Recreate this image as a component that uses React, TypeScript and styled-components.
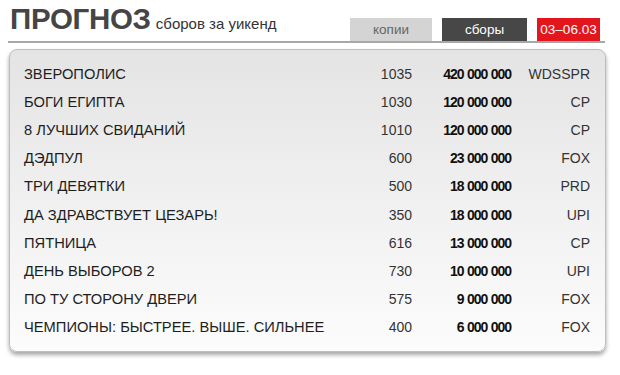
import React from "react";
import styled, { createGlobalStyle } from "styled-components";

const Global = createGlobalStyle`
  html, body { margin: 0; padding: 0; background: #fff; }
  body { font-family: "Liberation Sans", Arial, sans-serif; }
`;

const Page = styled.div`
  width: 620px;
  height: 375px;
  padding: 0 0 0 8px;
  box-sizing: border-box;
`;

const Header = styled.div`
  width: 597px;
  height: 43px;
  display: flex;
  align-items: flex-end;
  border-bottom: 2px solid #a8a8a8;
  box-sizing: border-box;
`;

const Title = styled.div`
  display: flex;
  align-items: baseline;
  gap: 5px;
  padding-left: 2px;
  margin-bottom: 5px;
  flex: 1;
`;

const Big = styled.span`
  font-size: 29.5px;
  font-weight: bold;
  color: #454545;
  letter-spacing: -0.3px;
`;

const Small = styled.span`
  font-size: 15px;
  color: #333;
`;

const Tabs = styled.div`
  display: flex;
  gap: 10px;
  padding-right: 5px;
`;

const Tab = styled.div<{ $bg: string; $fg: string; $w: number }>`
  width: ${(p) => p.$w}px;
  height: 23px;
  background: ${(p) => p.$bg};
  color: ${(p) => p.$fg};
  font-size: 13.5px;
  display: flex;
  align-items: center;
  justify-content: center;
`;

const Card = styled.div`
  margin-top: 6px;
  margin-left: 1px;
  width: 597px;
  height: 303px;
  box-sizing: border-box;
  border: 1px solid #bdbdbd;
  border-radius: 8px;
  background: linear-gradient(to bottom, #e4e4e4 0%, #f0f0f0 50%, #fcfcfc 100%);
  box-shadow: 0 3px 4px rgba(0, 0, 0, 0.35);
  padding: 10px 15px 10px 14px;
  display: flex;
  flex-direction: column;
`;

const Row = styled.div`
  display: grid;
  grid-template-columns: 1fr 60px 100px 78px;
  height: 28.2px;
  align-items: center;
  font-size: 14px;
  color: #1e1e1e;
`;

const Name = styled.div`
  font-size: 14.7px;
`;

const Num = styled.div`
  text-align: right;
  color: #333;
`;

const Money = styled.div`
  text-align: right;
  font-weight: bold;
  color: #111;
  letter-spacing: -1px;
  word-spacing: 0.5px;
  padding-right: 1px;
`;

const rows: [string, string, string, string][] = [
  ["ЗВЕРОПОЛИС", "1035", "420 000 000", "WDSSPR"],
  ["БОГИ ЕГИПТА", "1030", "120 000 000", "CP"],
  ["8 ЛУЧШИХ СВИДАНИЙ", "1010", "120 000 000", "CP"],
  ["ДЭДПУЛ", "600", "23 000 000", "FOX"],
  ["ТРИ ДЕВЯТКИ", "500", "18 000 000", "PRD"],
  ["ДА ЗДРАВСТВУЕТ ЦЕЗАРЬ!", "350", "18 000 000", "UPI"],
  ["ПЯТНИЦА", "616", "13 000 000", "CP"],
  ["ДЕНЬ ВЫБОРОВ 2", "730", "10 000 000", "UPI"],
  ["ПО ТУ СТОРОНУ ДВЕРИ", "575", "9 000 000", "FOX"],
  ["ЧЕМПИОНЫ: БЫСТРЕЕ. ВЫШЕ. СИЛЬНЕЕ", "400", "6 000 000", "FOX"],
];

export default function App() {
  return (
    <Page>
      <Global />
      <Header>
        <Title>
          <Big>ПРОГНОЗ</Big>
          <Small>сборов за уикенд</Small>
        </Title>
        <Tabs>
          <Tab $bg="#d4d4d4" $fg="#666" $w={82}>копии</Tab>
          <Tab $bg="#474747" $fg="#fff" $w={85}>сборы</Tab>
          <Tab $bg="#e3161d" $fg="#fff" $w={63}>03–06.03</Tab>
        </Tabs>
      </Header>
      <Card>
        {rows.map((r) => (
          <Row key={r[0]}>
            <Name>{r[0]}</Name>
            <Num>{r[1]}</Num>
            <Money>{r[2]}</Money>
            <Num>{r[3]}</Num>
          </Row>
        ))}
      </Card>
    </Page>
  );
}
